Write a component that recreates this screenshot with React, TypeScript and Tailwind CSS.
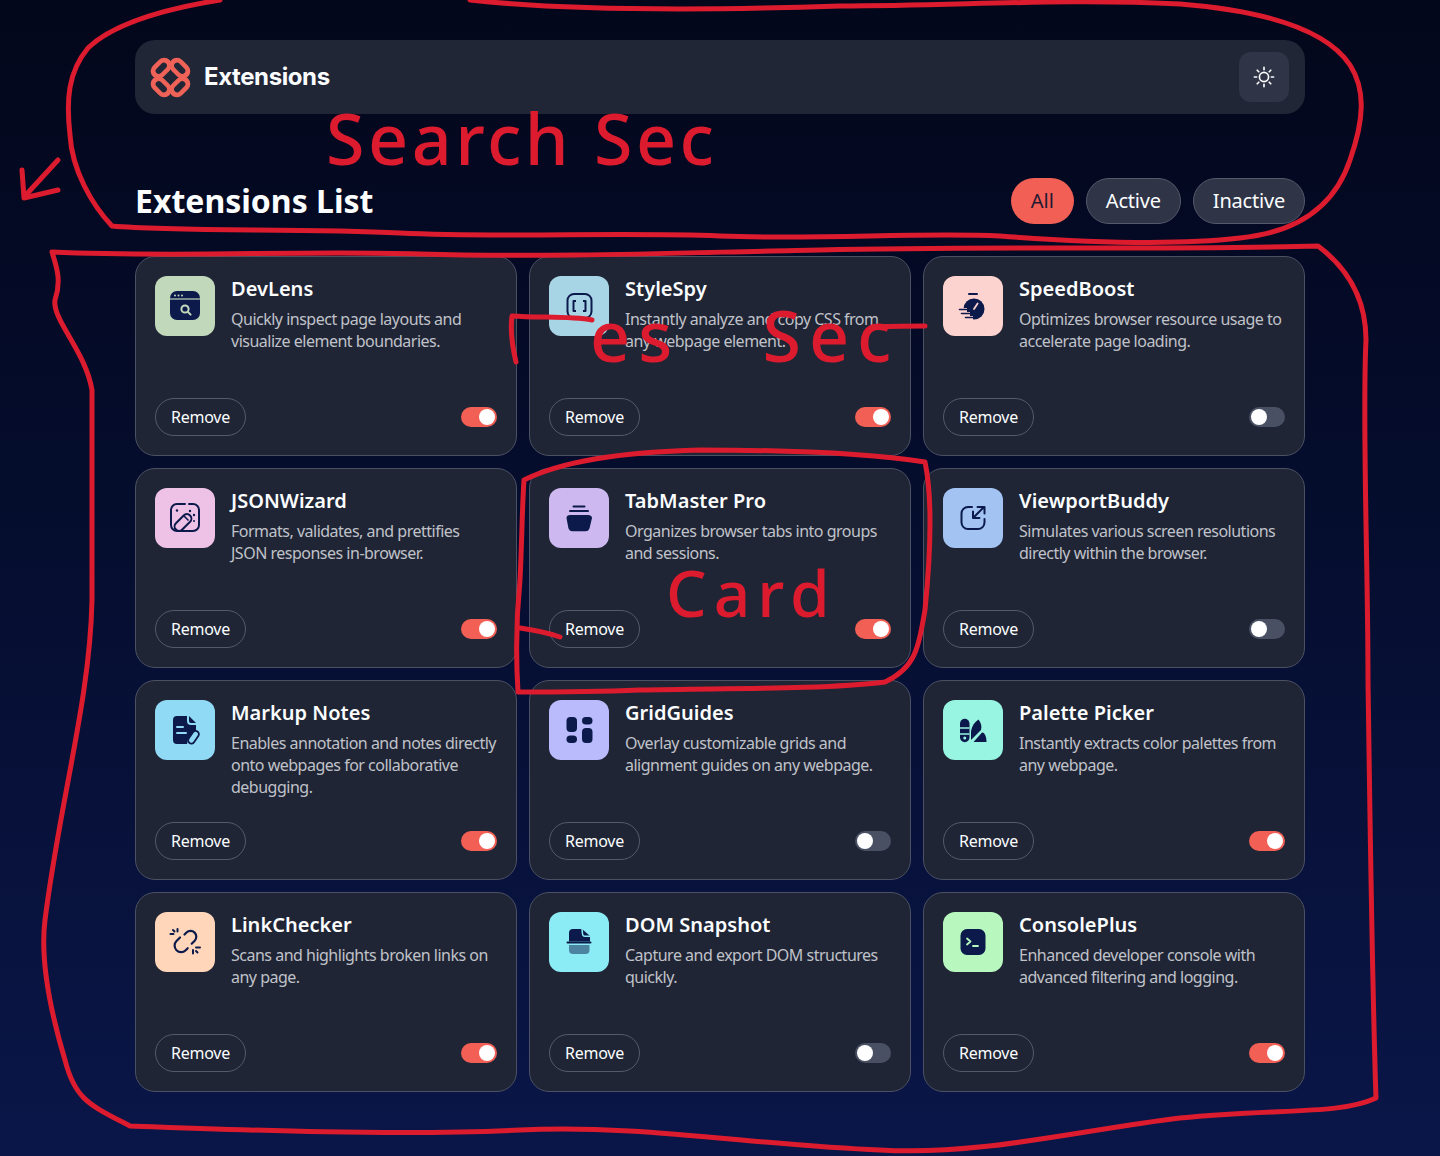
import React from "react";

const D = "#0b1a4b";

const Svg = ({ children }: { children: React.ReactNode }) => (
  <svg viewBox="0 0 60 60" className="w-[60px] h-[60px]" fill="none">{children}</svg>
);

const icons: Record<string, React.ReactNode> = {
  devlens: (
    <Svg>
      <rect x="15" y="15" width="30" height="29" rx="7" fill={D} />
      <path d="M15 23h30" stroke="#c2d8bb" strokeWidth="1.2" />
      <circle cx="20" cy="19.5" r="1" fill="#c2d8bb" />
      <circle cx="23.5" cy="19.5" r="1" fill="#c2d8bb" />
      <circle cx="27" cy="19.5" r="1" fill="#c2d8bb" />
      <circle cx="30" cy="33" r="3.6" stroke="#c2d8bb" strokeWidth="2" />
      <path d="M33 36l2.6 2.6" stroke="#c2d8bb" strokeWidth="2" strokeLinecap="round" />
    </Svg>
  ),
  stylespy: (
    <Svg>
      <rect x="18.5" y="18" width="24" height="24" rx="6.5" stroke={D} strokeWidth="2" />
      <path d="M27 25h-2.5v10H27M34 25h2.5v10H34" stroke={D} strokeWidth="2" strokeLinejoin="round" />
    </Svg>
  ),
  speedboost: (
    <Svg>
      <path d="M26 18h8" stroke={D} strokeWidth="2" strokeLinecap="round" />
      <circle cx="31" cy="33" r="10.5" fill={D} />
      <path d="M31 33l3.6-5.5" stroke="#fdd3d0" strokeWidth="1.8" strokeLinecap="round" />
      <path d="M16 34h8M18 38h9M22 42h8" stroke="#fdd3d0" strokeWidth="4" />
      <path d="M16.5 33.5h7M18.5 37.5h8M22.5 41.5h7" stroke={D} strokeWidth="1.6" strokeLinecap="round" />
    </Svg>
  ),
  json: (
    <Svg>
      <path d="M34 16h4a6 6 0 0 1 6 6v15a6 6 0 0 1-6 6H22a6 6 0 0 1-6-6V22a6 6 0 0 1 6-6h8" stroke={D} strokeWidth="2" strokeLinecap="round" />
      <rect x="18" y="30" width="20" height="9" rx="4.5" transform="rotate(-45 28 34.500)" fill="#eec2e6" stroke={D} strokeWidth="2" />
      <path d="M28.500 27.500l5 5" stroke={D} strokeWidth="1.600" />
      <circle cx="22" cy="22.5" r="1.200" fill={D} />
      <circle cx="35" cy="23" r="1.200" fill={D} />
      <circle cx="39" cy="27" r="1.200" fill={D} />
      <circle cx="39" cy="33" r="1" fill={D} />
    </Svg>
  ),
  tab: (
    <Svg>
      <path d="M24.500 18.500h11" stroke={D} strokeWidth="2" strokeLinecap="round" />
      <path d="M21 23h18" stroke={D} strokeWidth="2" strokeLinecap="round" />
      <path d="M21 27h18c2 0 4 1 4 3l-2.400 10c-.5 2-2 3.300-4 3.300H23.400c-2 0-3.500-1.300-4-3.300L17.500 30c0-2 1.500-3 3.500-3z" fill={D} />
    </Svg>
  ),
  viewport: (
    <Svg>
      <path d="M29 19h-4a6.500 6.500 0 0 0-6.500 6.500v9A6.500 6.500 0 0 0 25 41h10a6.500 6.500 0 0 0 6.500-6.500V31" stroke={D} strokeWidth="2" strokeLinecap="round" />
      <path d="M41 19L30.500 29.500M30 23.500v6.500h6.500M34.500 19H41.500V25.500" stroke={D} strokeWidth="2" strokeLinecap="round" strokeLinejoin="round" />
    </Svg>
  ),
  markup: (
    <Svg>
      <path d="M22 16h10v5a4 4 0 0 0 4 4h5v6l-8 8-1 5H22a4 4 0 0 1-4-4V20a4 4 0 0 1 4-4z" fill={D} />
      <path d="M34 16l7 7h-5a2 2 0 0 1-2-2z" fill={D} />
      <path d="M22 27h6M22 33h9" stroke="#91daf6" strokeWidth="2" strokeLinecap="round" />
      <rect x="31.500" y="34" width="14" height="6.500" rx="3.250" transform="rotate(-55 38.500 37.250)" fill="#91daf6" stroke={D} strokeWidth="1.800" />
    </Svg>
  ),
  grid: (
    <Svg>
      <rect x="17.500" y="17" width="10.500" height="15" rx="4" fill={D} />
      <rect x="33" y="17" width="10.500" height="7.500" rx="3.750" fill={D} />
      <rect x="17.500" y="35.500" width="10.500" height="7.500" rx="3.750" fill={D} />
      <rect x="33" y="28" width="10.500" height="15" rx="4" fill={D} />
    </Svg>
  ),
  palette: (
    <Svg>
      <path d="M17 23.500a4.750 4.750 0 0 1 9.500 0v14a4.750 4.750 0 0 1-9.500 0z" fill={D} />
      <path d="M17 28h9.500M17 34h9.500" stroke="#98f5e1" strokeWidth="1.400" />
      <circle cx="21.750" cy="38" r="1.500" fill="#98f5e1" />
      <path d="M28 40V31c1-5 3.500-9 7.500-11.500 2.500 3 3.500 7 2.500 10.500z" fill={D} />
      <path d="M30.500 42l8.500-9.500c2.500-.5 4.500 4 4.500 9.500z" fill={D} />
    </Svg>
  ),
  link: (
    <Svg>
      <path d="M29.500 22.500l2-2a5.800 5.800 0 0 1 8.200 8.200l-3 3" stroke={D} strokeWidth="2.200" strokeLinecap="round" />
      <path d="M25 25.500l-3.500 3.500a6.500 6.500 0 0 0 9.200 9.200l2-2" stroke={D} strokeWidth="2.200" strokeLinecap="round" />
      <path d="M22.500 17v2.500M15.500 22h3M18 18l1.500 1.500M38 38v3.500M41 35.500h4M41 39l1.500 1.500" stroke={D} strokeWidth="2" strokeLinecap="round" />
    </Svg>
  ),
  dom: (
    <Svg>
      <path d="M24 17h9l8 7v5.500H20V21a4 4 0 0 1 4-4z" fill={D} />
      <path d="M33 17l.5 5c.2 1.500 1 2.200 2.500 2.200h5" stroke="#8cecf5" strokeWidth="1.500" fill="none" />
      <path d="M18.500 30.500h23" stroke={D} strokeWidth="2" strokeLinecap="round" />
      <path d="M20 33h20.500v5a4 4 0 0 1-4 4H24a4 4 0 0 1-4-4z" fill={D} fillOpacity="0.5" />
    </Svg>
  ),
  console: (
    <Svg>
      <rect x="17.500" y="17" width="25" height="26" rx="6.500" fill={D} />
      <path d="M24 26.500l3.500 3-3.500 3M30 34h5" stroke="#b8f8bf" strokeWidth="1.800" strokeLinecap="round" strokeLinejoin="round" />
    </Svg>
  ),
};

type Ext = { name: string; desc: string; icon: string; bg: string; on: boolean };

const items: Ext[] = [
  { name: "DevLens", desc: "Quickly inspect page layouts and visualize element boundaries.", icon: "devlens", bg: "bg-[#c2d8bb]", on: true },
  { name: "StyleSpy", desc: "Instantly analyze and copy CSS from any webpage element.", icon: "stylespy", bg: "bg-[#a8d5e6]", on: true },
  { name: "SpeedBoost", desc: "Optimizes browser resource usage to accelerate page loading.", icon: "speedboost", bg: "bg-[#fdd3d0]", on: false },
  { name: "JSONWizard", desc: "Formats, validates, and prettifies JSON responses in-browser.", icon: "json", bg: "bg-[#eec2e6]", on: true },
  { name: "TabMaster Pro", desc: "Organizes browser tabs into groups and sessions.", icon: "tab", bg: "bg-[#cdb8ef]", on: true },
  { name: "ViewportBuddy", desc: "Simulates various screen resolutions directly within the browser.", icon: "viewport", bg: "bg-[#a3c4f3]", on: false },
  { name: "Markup Notes", desc: "Enables annotation and notes directly onto webpages for collaborative debugging.", icon: "markup", bg: "bg-[#91daf6]", on: true },
  { name: "GridGuides", desc: "Overlay customizable grids and alignment guides on any webpage.", icon: "grid", bg: "bg-[#b9bbfd]", on: false },
  { name: "Palette Picker", desc: "Instantly extracts color palettes from any webpage.", icon: "palette", bg: "bg-[#98f5e1]", on: true },
  { name: "LinkChecker", desc: "Scans and highlights broken links on any page.", icon: "link", bg: "bg-[#ffd6ba]", on: true },
  { name: "DOM Snapshot", desc: "Capture and export DOM structures quickly.", icon: "dom", bg: "bg-[#8cecf5]", on: false },
  { name: "ConsolePlus", desc: "Enhanced developer console with advanced filtering and logging.", icon: "console", bg: "bg-[#b8f8bf]", on: true },
];

function Toggle({ on }: { on: boolean }) {
  return (
    <span className={`flex h-5 w-9 items-center rounded-full px-[2px] ${on ? "justify-end bg-[#f25f55]" : "justify-start bg-[#4a5063]"}`}>
      <span className="h-4 w-4 rounded-full bg-white" />
    </span>
  );
}

function Card({ e }: { e: Ext }) {
  return (
    <div className="flex h-[200px] flex-col justify-between rounded-[20px] border border-[#4b5162] bg-[#1f2535] p-[19px]">
      <div className="flex items-start gap-4">
        <div className={`h-[60px] w-[60px] shrink-0 rounded-xl ${e.bg}`}>{icons[e.icon]}</div>
        <div className="min-w-0">
          <h2 className="text-[20px] font-semibold leading-[26px] tracking-[0.02px] text-[#fbfdfe]">{e.name}</h2>
          <p className="mt-[6px] text-[16px] leading-[22px] tracking-[-0.5px] text-[#c0c2c9]">{e.desc}</p>
        </div>
      </div>
      <div className="flex items-center justify-between">
        <button className="flex h-[38px] w-[91px] items-center justify-center rounded-full border border-[#545a6b] text-[16px] tracking-[-0.2px] text-[#fbfdfe]">Remove</button>
        <Toggle on={e.on} />
      </div>
    </div>
  );
}

function Logo() {
  const outer = [[11, 11, -45], [29, 11, 45], [11, 29, 45], [29, 29, -45]];
  return (
    <svg viewBox="0 0 40 40" className="h-[41px] w-[41px]">
      {outer.map(([x, y, r], i) => (
        <rect key={i} x={x - 11.500} y={y - 7.500} width="23" height="15" rx="7.500" transform={`rotate(${r} ${x} ${y})`} fill="#ee6258" />
      ))}
      {outer.map(([x, y, r], i) => (
        <rect key={i} x={x - 6.500} y={y - 3} width="13" height="6" rx="3" transform={`rotate(${r} ${x} ${y})`} fill="#212636" />
      ))}
      <rect x="17.400" y="17.400" width="5.200" height="5.200" transform="rotate(45 20 20)" fill="#212636" />
    </svg>
  );
}

function Annotations() {
  const s = { stroke: "#dc1c2e", strokeWidth: 5, fill: "none", strokeLinecap: "round" as const, strokeLinejoin: "round" as const };
  return (
    <svg viewBox="0 0 1440 1156" className="pointer-events-none absolute left-0 top-0 h-[1156px] w-[1440px]">
      <path {...s} d="M220 0C170 8 115 22 88 48C68 72 66 100 70 135C72 170 92 205 112 226C180 232 300 228 400 233C500 238 620 232 720 236C820 240 920 232 1000 236C1080 242 1170 246 1240 238C1300 232 1335 205 1350 160C1364 120 1366 90 1350 65C1330 35 1280 12 1180 4C1060 -2 960 6 840 6C720 10 580 12 470 0" />
      <path {...s} d="M52 252C180 258 300 250 420 254C560 258 700 252 820 250C1000 246 1180 250 1318 246C1350 270 1366 300 1366 340C1362 420 1368 560 1368 680C1370 820 1372 980 1376 1098C1340 1115 1280 1108 1180 1118C1080 1130 980 1156 880 1150C760 1146 640 1124 520 1130C400 1136 240 1130 130 1126C90 1105 75 1100 65 1060C50 1010 40 960 45 920C60 800 90 700 92 600C92 520 92 450 92 390C85 350 52 320 55 300C62 280 56 265 52 252Z" />
      <path {...s} d="M524 480C560 462 620 452 700 450C780 450 860 452 925 462C933 500 930 560 925 610C918 650 915 668 885 682C820 690 720 688 640 690C590 692 550 692 518 692C516 660 516 620 520 580C522 540 522 510 524 480Z" />
      <path {...s} d="M516 362C512 345 510 330 512 316C540 318 570 316 592 320" />
      <path {...s} d="M872 327C890 326 905 326 925 326" />
      <path {...s} d="M520 628C535 630 548 633 560 637" />
      <path {...s} d="M58 160L24 197M22 170L24 198L58 190" />
    </svg>
  );
}

export default function App() {
  return (
    <div className="relative h-[1156px] overflow-hidden bg-gradient-to-b from-[#03071b] to-[#0a1648] font-['Noto_Sans',sans-serif]">
      <div className="mx-auto w-[1170px] pt-10">
        <header className="flex h-[74px] items-center justify-between rounded-[20px] bg-[#212636] pl-[15px] pr-4">
          <div className="flex items-center gap-[13px]">
            <Logo />
            <span className="font-['Inter',sans-serif] text-[24px] font-bold tracking-[-0.4px] text-[#fbfdfe]">Extensions</span>
          </div>
          <button className="flex h-[50px] w-[50px] items-center justify-center rounded-xl bg-[#2f3447]">
            <svg viewBox="0 0 24 24" className="h-[22px] w-[22px]" fill="none" stroke="#fbfdfe" strokeWidth="1.800" strokeLinecap="round">
              <circle cx="12" cy="12" r="5" />
              <path d="M12 1.500v2.500M12 20v2.500M1.500 12H4M20 12h2.500M4.600 4.600l1.700 1.700M17.700 17.700l1.700 1.700M4.600 19.400l1.700-1.700M17.700 6.300l1.700-1.700" />
            </svg>
          </button>
        </header>

        <div className="mt-[64px] flex h-[46px] items-center justify-between">
          <h1 className="text-[32px] font-bold leading-[46px] tracking-[0px] text-[#fbfdfe]">Extensions List</h1>
          <div className="flex gap-3">
            <button className="h-[46px] rounded-full bg-[#f25f55] px-5 text-[20px] text-[#1f1a33]">All</button>
            <button className="h-[46px] rounded-full border border-[#545a6b] bg-[#2f3447] px-[19px] text-[20px] tracking-[-0.2px] text-[#fbfdfe]">Active</button>
            <button className="h-[46px] rounded-full border border-[#545a6b] bg-[#2f3447] px-[19px] text-[20px] tracking-[-0.2px] text-[#fbfdfe]">Inactive</button>
          </div>
        </div>

        <div className="mt-8 grid grid-cols-3 gap-3">
          {items.map((e) => (
            <Card key={e.name} e={e} />
          ))}
        </div>
      </div>

      <Annotations />
      <span className="pointer-events-none absolute left-[326px] top-[88px] text-[70px] font-medium leading-[100px] tracking-[3.5px] text-[#dc1c2e]">Search Sec</span>
      <span className="pointer-events-none absolute left-[590px] top-[290px] text-[70px] font-medium leading-[90px] tracking-[8px] text-[#dc1c2e] [word-spacing:56px]">es Sec</span>
      <span className="pointer-events-none absolute left-[666px] top-[550px] text-[64px] font-medium leading-[86px] tracking-[7px] text-[#dc1c2e]">Card</span>
    </div>
  );
}
